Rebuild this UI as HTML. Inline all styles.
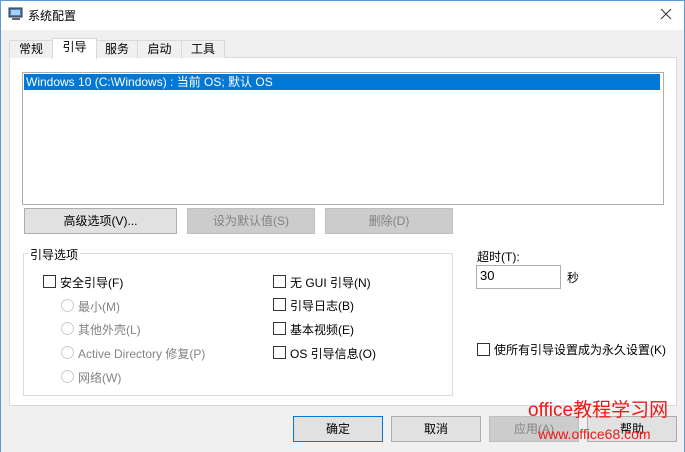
<!DOCTYPE html>
<html><head><meta charset="utf-8"><style>
*{box-sizing:border-box;margin:0;padding:0}
body{width:685px;height:452px;overflow:hidden;background:#f0f0f0;font-family:"Liberation Sans","Noto Sans CJK SC",sans-serif;font-size:12px;color:#000;position:relative}
.a{position:absolute}
.win{left:0;top:0;width:685px;height:452px;border:1px solid #5b9bd5;border-bottom:none}
.title{left:1px;top:1px;width:683px;height:29px;background:#fff}
.tab{top:40px;height:18px;border:1px solid #d9d9d9;border-bottom:none;background:#f0f0f0;text-align:center;line-height:17px}
.btn{height:26px;border:1px solid #adadad;background:#e1e1e1;text-align:center;line-height:24px}
.dis{background:#cccccc;border-color:#bfbfbf;color:#838383}
.cb{width:13px;height:13px;border:1px solid #333;background:#fff}
.rd{width:13px;height:13px;border:1px solid #ccc;border-radius:50%;background:#fff}
.g{color:#838383}
</style></head><body>
<div class="a win"></div>
<div class="a title"></div>
<svg class="a" style="left:8px;top:6px" width="16" height="16"><rect x="1" y="2" width="13" height="9" fill="#4a7fc1" stroke="#333" stroke-width="1"/><rect x="3" y="4" width="9" height="5" fill="#a8d0f0"/><rect x="4" y="12" width="8" height="2" fill="#666"/></svg>
<div class="a" style="left:28px;top:7px">系统配置</div>
<svg class="a" style="left:660px;top:8px" width="12" height="12"><path d="M1 1L11 11M11 1L1 11" stroke="#333" stroke-width="1"/></svg>
<div class="a" style="left:9px;top:57px;width:668px;height:349px;background:#fff;border:1px solid #d9d9d9"></div>
<div class="a tab" style="left:9px;width:44px">常规</div>
<div class="a tab" style="left:96px;width:42px">服务</div>
<div class="a tab" style="left:137px;width:45px">启动</div>
<div class="a tab" style="left:181px;width:44px">工具</div>
<div class="a tab" style="left:52px;top:38px;width:45px;height:21px;background:#fff">引导</div>
<div class="a" style="left:22px;top:72px;width:642px;height:133px;border:1px solid #adadad;background:#fff"></div>
<div class="a" style="left:24px;top:74px;width:636px;height:16px;background:#0078d7;color:#fff;line-height:16px;padding-left:2px">Windows 10 (C:\Windows) : 当前 OS; 默认 OS</div>
<div class="a btn" style="left:24px;top:208px;width:153px">高级选项(V)...</div>
<div class="a btn dis" style="left:187px;top:208px;width:128px">设为默认值(S)</div>
<div class="a btn dis" style="left:325px;top:208px;width:128px">删除(D)</div>
<div class="a" style="left:23px;top:253px;width:430px;height:143px;border:1px solid #dcdcdc"></div>
<div class="a" style="left:28px;top:246px;background:#fff;padding:0 2px">引导选项</div>
<div class="a cb" style="left:43px;top:275px"></div><div class="a" style="left:60px;top:274px">安全引导(F)</div>
<div class="a rd" style="left:61px;top:299px"></div><div class="a g" style="left:78px;top:298px">最小(M)</div>
<div class="a rd" style="left:61px;top:322px"></div><div class="a g" style="left:78px;top:321px">其他外壳(L)</div>
<div class="a rd" style="left:61px;top:346px"></div><div class="a g" style="left:78px;top:345px">Active Directory 修复(P)</div>
<div class="a rd" style="left:61px;top:370px"></div><div class="a g" style="left:78px;top:369px">网络(W)</div>
<div class="a cb" style="left:273px;top:275px"></div><div class="a" style="left:290px;top:274px">无 GUI 引导(N)</div>
<div class="a cb" style="left:273px;top:298px"></div><div class="a" style="left:290px;top:297px">引导日志(B)</div>
<div class="a cb" style="left:273px;top:322px"></div><div class="a" style="left:290px;top:321px">基本视频(E)</div>
<div class="a cb" style="left:273px;top:346px"></div><div class="a" style="left:290px;top:345px">OS 引导信息(O)</div>
<div class="a" style="left:477px;top:248px">超时(T):</div>
<div class="a" style="left:476px;top:265px;width:85px;height:24px;border:1px solid #adadad;background:#fff;padding:2px 3px;font-size:13px">30</div>
<div class="a" style="left:567px;top:269px">秒</div>
<div class="a cb" style="left:477px;top:343px"></div><div class="a" style="left:494px;top:341px">使所有引导设置成为永久设置(K)</div>
<div class="a btn" style="left:293px;top:416px;width:90px;border:1px solid #0078d7">确定</div>
<div class="a btn" style="left:391px;top:416px;width:90px">取消</div>
<div class="a btn dis" style="left:489px;top:416px;width:90px">应用(A)</div>
<div class="a btn" style="left:587px;top:416px;width:90px">帮助</div>
<div class="a" style="left:528px;top:400px;color:#f01818;font-size:19px;line-height:22px">office教程学习网</div>
<div class="a" style="left:538px;top:425px;color:#f01818;font-size:14px;line-height:18px">www.office68.com</div>
</body></html>
